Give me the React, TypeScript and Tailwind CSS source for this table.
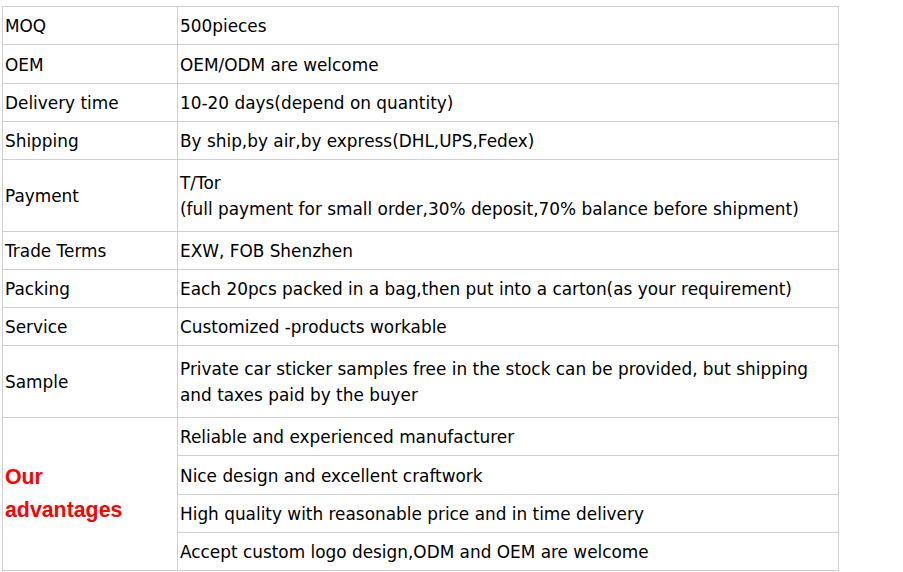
const rows: { label: string; value: string[]; tall?: boolean }[] = [
  { label: 'MOQ', value: ['500pieces'] },
  { label: 'OEM', value: ['OEM/ODM are welcome'] },
  { label: 'Delivery time', value: ['10-20 days(depend on quantity)'] },
  { label: 'Shipping', value: ['By ship,by air,by express(DHL,UPS,Fedex)'] },
  {
    label: 'Payment',
    value: ['T/Tor', '(full payment for small order,30% deposit,70% balance before shipment)'],
    tall: true,
  },
  { label: 'Trade Terms', value: ['EXW, FOB Shenzhen'] },
  { label: 'Packing', value: ['Each 20pcs packed in a bag,then put into a carton(as your requirement)'] },
  { label: 'Service', value: ['Customized -products workable'] },
  {
    label: 'Sample',
    value: ['Private car sticker samples free in the stock can be provided, but shipping', 'and taxes paid by the buyer'],
    tall: true,
  },
];

const advantages = [
  'Reliable and experienced manufacturer',
  'Nice design and excellent craftwork',
  'High quality with reasonable price and in time delivery',
  'Accept custom logo design,ODM and OEM are welcome',
];

const cell = 'border-r border-b border-[#cfcfcf] flex flex-col justify-center';

export default function App() {
  return (
    <div className="w-[903px] h-[572px] bg-white pt-[6px] pl-[2px] text-black font-['DejaVu_Sans',Verdana,sans-serif] text-[16.9px] leading-[26px]">
      <div className="grid grid-cols-[175px_661px] grid-rows-[38px_39px_38px_38px_72px_38px_38px_38px_72px_38px_39px_38px_38px] w-[837px] border-t border-l border-[#cfcfcf]">
        {rows.map((row) => (
          <div key={row.label} className="contents">
            <div className={`${cell} pl-[2px] pt-[1px]`}>{row.label}</div>
            <div className={`${cell} pl-[2px] pt-[1px]`}>
              {row.value.map((line) => (
                <div key={line}>{line}</div>
              ))}
            </div>
          </div>
        ))}
        <div className={`${cell} row-span-4 pl-[2px] font-['Liberation_Sans',Arial,sans-serif] font-bold text-[21.33px] leading-[33px] text-[#ff0000]`}>
          <div>Our</div>
          <div>advantages</div>
        </div>
        {advantages.map((a) => (
          <div key={a} className={`${cell} col-start-2 pl-[2px] pt-[1px]`}>
            {a}
          </div>
        ))}
      </div>
    </div>
  );
}
